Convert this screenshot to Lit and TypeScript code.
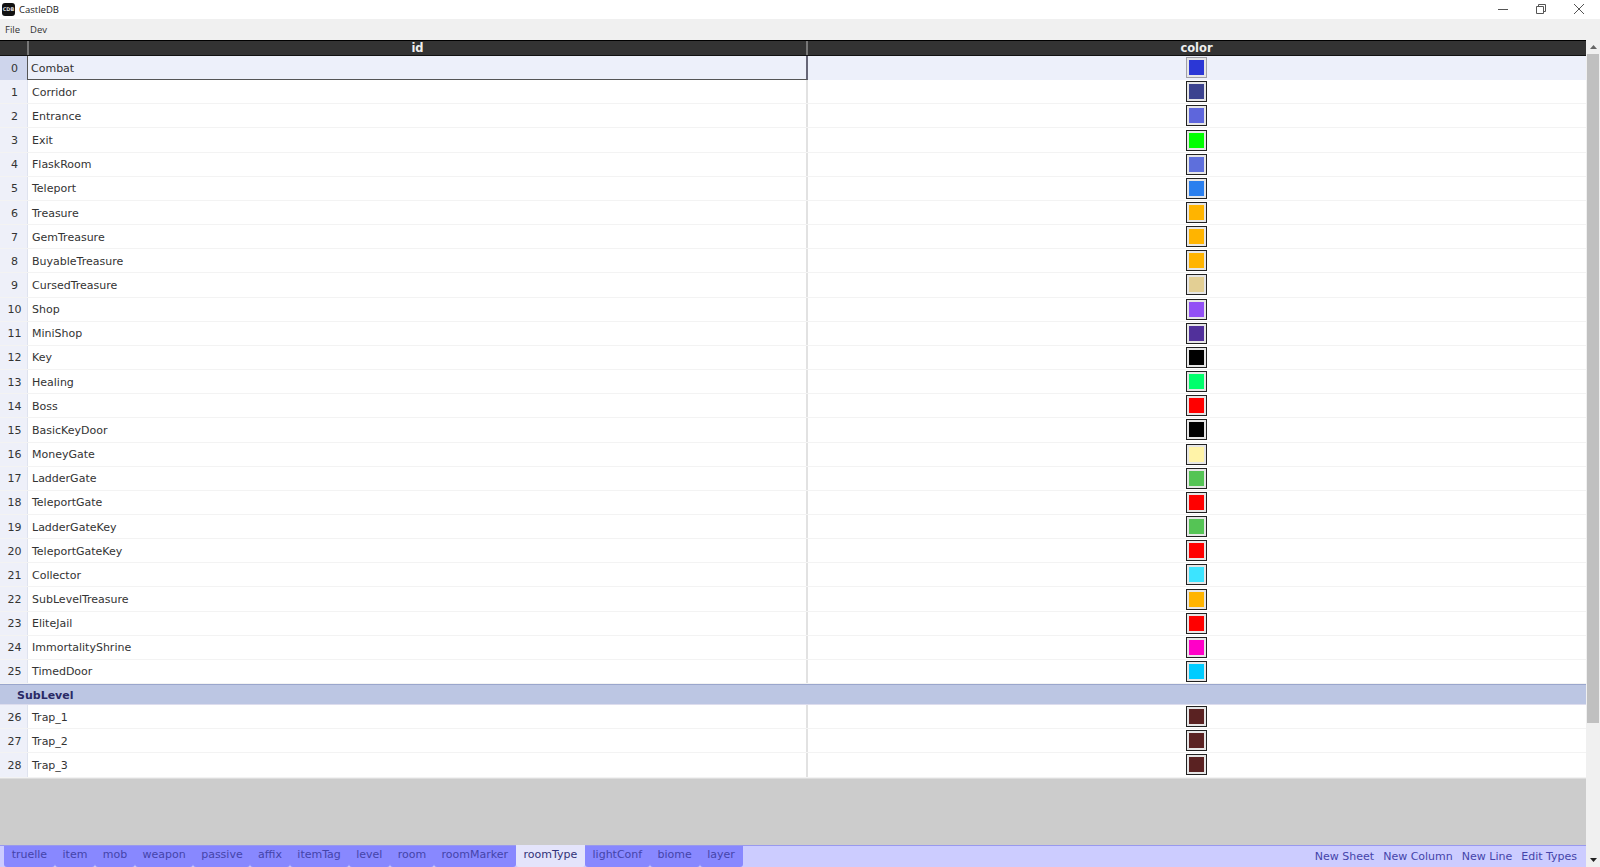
import { html, css, LitElement } from "lit";
import { customElement } from "lit/decorators.js";

type Row = [string, string];

const ROWS: Row[] = [
  ["Combat", "#2b37d6"],
  ["Corridor", "#3c438f"],
  ["Entrance", "#5e66dc"],
  ["Exit", "#00ff00"],
  ["FlaskRoom", "#5e6fdc"],
  ["Teleport", "#2a7fee"],
  ["Treasure", "#ffb400"],
  ["GemTreasure", "#ffb400"],
  ["BuyableTreasure", "#ffb400"],
  ["CursedTreasure", "#e3cf94"],
  ["Shop", "#9250f5"],
  ["MiniShop", "#51309b"],
  ["Key", "#000000"],
  ["Healing", "#00ff6c"],
  ["Boss", "#ff0000"],
  ["BasicKeyDoor", "#000000"],
  ["MoneyGate", "#fff3a8"],
  ["LadderGate", "#55c455"],
  ["TeleportGate", "#ff0000"],
  ["LadderGateKey", "#55c455"],
  ["TeleportGateKey", "#ff0000"],
  ["Collector", "#3ce4ff"],
  ["SubLevelTreasure", "#ffb400"],
  ["EliteJail", "#ff0000"],
  ["ImmortalityShrine", "#ff00c8"],
  ["TimedDoor", "#00ccff"],
];

const SUB_ROWS: Row[] = [
  ["Trap_1", "#5a2222"],
  ["Trap_2", "#5a2222"],
  ["Trap_3", "#5a2222"],
];

const TABS = ["truelle", "item", "mob", "weapon", "passive", "affix", "itemTag", "level", "room", "roomMarker", "roomType", "lightConf", "biome", "layer"];
const ACTIONS = ["New Sheet", "New Column", "New Line", "Edit Types"];

@customElement("app-root")
export class AppRoot extends LitElement {
  static styles = css`
    :host {
      display: flex;
      flex-direction: column;
      width: 1600px;
      height: 867px;
      overflow: hidden;
      background: #fff;
      font-family: "DejaVu Sans", Verdana, sans-serif;
    }

    .title {
      height: 19px;
      display: flex;
      align-items: center;
      font: 9.5px "Open Sans", "Noto Sans", sans-serif;
      color: #222;
      flex: none;
    }
    .logo {
      width: 13px;
      height: 13px;
      margin: 0 4px 0 2px;
      background: #111;
      border-radius: 3px;
      color: #ddd;
      font: bold 5px "DejaVu Sans", sans-serif;
      line-height: 13px;
      text-align: center;
    }
    .win {
      margin-left: auto;
      display: flex;
      gap: 22px;
      padding: 0 13px 2px 0;
      align-items: center;
    }
    .win svg {
      display: block;
      width: 16px;
      height: 16px;
      fill: none;
      stroke: #555;
      stroke-width: 1;
    }

    .menu {
      height: 21px;
      background: #f0f0f0;
      display: flex;
      align-items: center;
      gap: 10px;
      padding-left: 5px;
      font: 9.5px "Open Sans", "Noto Sans", sans-serif;
      color: #333;
      flex: none;
    }

    .main {
      flex: 1;
      display: flex;
      min-height: 0;
    }
    .content {
      flex: 1;
      display: flex;
      flex-direction: column;
      background: #cccccc;
      min-width: 0;
    }

    .row {
      display: grid;
      grid-template-columns: 27px 781px 1fr;
      height: 24.17px;
      flex: none;
      box-sizing: border-box;
      border-bottom: 1px solid #f3f3f3;
      background: #fff;
      font-size: 11px;
      color: #333;
    }
    .row > div {
      display: flex;
      align-items: center;
      min-height: 0;
    }
    .row .idx {
      background: #eef0f9;
      justify-content: center;
      padding: 1px 0 0 2px;
      box-sizing: border-box;
      color: #333;
    }
    .row .id {
      padding: 1px 0 0 4px;
      box-sizing: border-box;
      border-left: 1px solid #dfe3ee;
      border-right: 2px solid #e2e2e2;
    }
    .row .col {
      justify-content: center;
      padding-right: 1px;
    }

    .row.head {
      height: 16px;
      background: #333;
      border: 0;
      border-top: 1px solid #000;
      border-bottom: 1px solid #111;
      color: #eee;
      font-weight: bold;
      font-size: 11.5px;
    }
    .head .idx {
      background: #333;
    }
    .row.head .id {
      justify-content: center;
      padding: 0;
      border-left: 2px solid #777;
      border-right: 2px solid #777;
    }

    .row.sel {
      background: #edf0fa;
      border-bottom: 0;
    }
    .row.sel .idx {
      background: #ced5ec;
    }
    .row.sel .id {
      border: 1px solid #555;
      border-top: 0;
      border-right: 2px solid #667;
      padding-left: 3px;
    }

    .swatch {
      width: 21px;
      height: 21px;
      flex: none;
      box-sizing: border-box;
      border: 1px solid #222;
      box-shadow: inset 0 0 0 2px #e6e6e6;
    }
    .sel .swatch {
      border-color: #a0a0a8;
      margin-bottom: 1px;
    }

    .group {
      height: 21px;
      flex: none;
      box-sizing: border-box;
      background: #bcc6e3;
      border-top: 1px solid #9aa6cc;
      border-bottom: 1px solid #dde;
      padding: 1px 0 0 17px;
      display: flex;
      align-items: center;
      font-size: 11px;
      font-weight: bold;
      color: #2a2a66;
    }
    .spacer {
      flex: 1;
      border-top: 1px solid #ddd;
    }

    .bottom {
      height: 22px;
      flex: none;
      box-sizing: border-box;
      background: #ccccff;
      border-top: 1px solid #9999ee;
      padding-left: 4px;
      display: flex;
      font-size: 11px;
      color: #4444aa;
    }
    .tabs {
      display: flex;
    }
    .tab {
      padding: 0 7.7px;
      line-height: 17px;
      height: 21px;
      box-sizing: border-box;
      background: #8888ff;
      border-radius: 0 0 3px 3px;
    }
    .tab.on {
      background: #e4e4fb;
      color: #333377;
      margin-top: -1px;
      height: 22px;
      line-height: 19px;
    }
    .actions {
      margin-left: auto;
      display: flex;
      gap: 9px;
      padding-right: 9px;
      line-height: 21px;
    }

    .scroll {
      width: 14px;
      flex: none;
      background: #f0f0f0;
      display: flex;
      flex-direction: column;
      align-items: center;
    }
    .arrow {
      height: 14px;
      flex: none;
      display: flex;
      align-items: center;
      justify-content: center;
    }
    .arrow svg {
      width: 7px;
      height: 4px;
      fill: #666;
    }
    .arrow.down svg {
      fill: #222;
    }
    .thumb {
      width: 12px;
      height: 669px;
      background: #c0c0c0;
      flex: none;
    }
    .track {
      flex: 1;
    }
  `;

  renderRow(row: Row, n: number, sel = false) {
    return html`<div class="row ${sel ? "sel" : ""}">
      <div class="idx">${n}</div>
      <div class="id">${row[0]}</div>
      <div class="col"><div class="swatch" style="background:${row[1]}"></div></div>
    </div>`;
  }

  render() {
    return html`
      <div class="title">
        <div class="logo">CDB</div>
        CastleDB
        <div class="win">
          <svg viewBox="0 0 16 16"><path d="M3 8.5h10" /></svg>
          <svg viewBox="0 0 16 16"><path d="M3.5 5.5h7v7h-7zM5.5 5.5v-2h7v7h-2" /></svg>
          <svg viewBox="0 0 16 16"><path d="M3 3l10 10M13 3L3 13" /></svg>
        </div>
      </div>
      <div class="menu"><span>File</span><span>Dev</span></div>
      <div class="main">
        <div class="content">
          <div class="row head">
            <div class="idx"></div>
            <div class="id">id</div>
            <div class="col">color</div>
          </div>
          ${ROWS.map((r, i) => this.renderRow(r, i, i === 0))}
          <div class="group">SubLevel</div>
          ${SUB_ROWS.map((r, i) => this.renderRow(r, i + ROWS.length))}
          <div class="spacer"></div>
          <div class="bottom">
            <div class="tabs">
              ${TABS.map((t) => html`<div class="tab ${t === "roomType" ? "on" : ""}">${t}</div>`)}
            </div>
            <div class="actions">${ACTIONS.map((a) => html`<span>${a}</span>`)}</div>
          </div>
        </div>
        <div class="scroll">
          <div class="arrow"><svg viewBox="0 0 7 4"><path d="M3.5 0L7 4H0z" /></svg></div>
          <div class="thumb"></div>
          <div class="track"></div>
          <div class="arrow down"><svg viewBox="0 0 7 4"><path d="M0 0h7L3.5 4z" /></svg></div>
        </div>
      </div>
    `;
  }
}
